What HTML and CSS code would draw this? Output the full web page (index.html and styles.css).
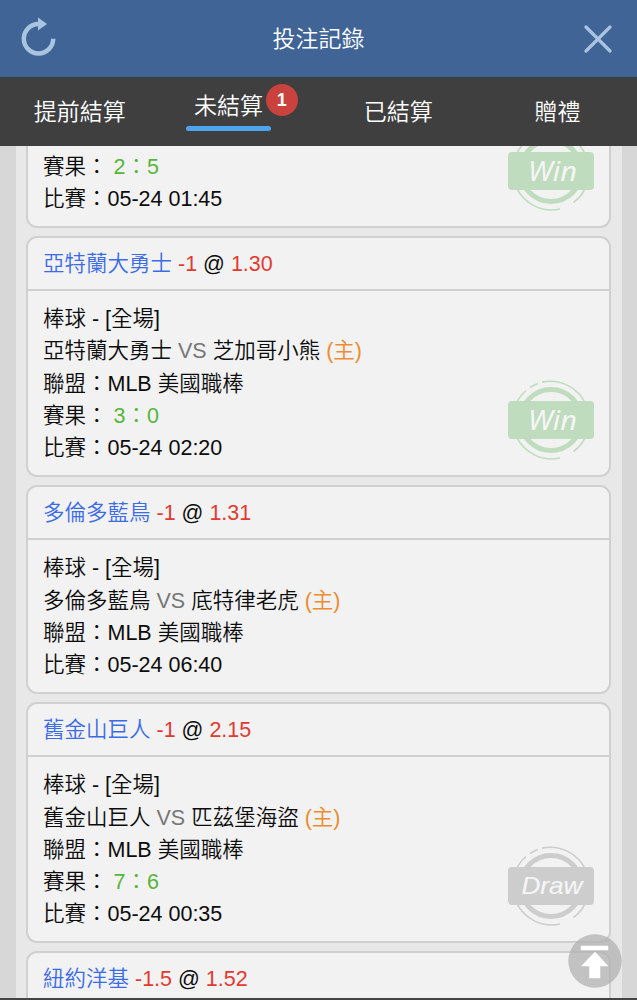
FILE: index.html
```html
<!DOCTYPE html>
<html lang="zh-Hant">
<head>
    <meta charset="UTF-8">
    <meta name="viewport" content="width=device-width, initial-scale=1.0">
    <title>投注記錄</title>
    <link rel="stylesheet" href="styles.css">
</head>
<body>
    <!-- stamp artwork shared by the cards -->
    <svg class="defs" width="0" height="0">
        <symbol id="stamp" viewBox="0 0 86 80">
            <circle cx="43" cy="40" r="30.5" fill="none" stroke="currentColor" stroke-width="5"/>
            <path d="M34 2.100A39 39 0 0 1 65.500 71.500M52 78A39 39 0 0 1 18 10.500M22 7.500A39 39 0 0 1 30 3.500" fill="none" stroke="currentColor" stroke-width="1.600"/>
            <rect y="21" width="86" height="38" rx="4" fill="currentColor"/>
        </symbol>
    </svg>

    <header class="header">
        <svg class="icon-refresh" width="36" height="40" viewBox="0 0 36 40">
            <path d="M18.500 7A14.700 14.700 0 1 0 33.200 21.700" fill="none" stroke="currentColor" stroke-width="4.500"/>
            <path d="M18 0.500L27 7L18 13.500Z" fill="currentColor"/>
        </svg>
        <h1>投注記錄</h1>
        <svg class="icon-close" width="28" height="28" viewBox="0 0 28 28">
            <path d="M2 2L26 26M26 2L2 26" fill="none" stroke="currentColor" stroke-width="3.200" stroke-linecap="round"/>
        </svg>
    </header>

    <nav class="tabs">
        <div class="tab">提前結算</div>
        <div class="tab active"><span class="tab-label">未結算<span class="badge">1</span></span></div>
        <div class="tab">已結算</div>
        <div class="tab">贈禮</div>
    </nav>

    <main class="list">
        <section class="card cut">
            <div class="card-body">
                <p>賽果： <span class="score">2：5</span></p>
                <p>比賽：05-24 01:45</p>
            </div>
            <svg class="stamp win" width="86" height="80">
                <use href="#stamp"/>
                <text x="20" y="50" textLength="49" lengthAdjust="spacingAndGlyphs">Win</text>
            </svg>
        </section>

        <section class="card">
            <h2 class="card-title"><span class="team">亞特蘭大勇士</span> <span class="odds">-1</span> @ <span class="odds">1.30</span></h2>
            <div class="card-body">
                <p>棒球 - [全場]</p>
                <p>亞特蘭大勇士 <span class="vs">VS</span> 芝加哥小熊 <span class="home">(主)</span></p>
                <p>聯盟：MLB 美國職棒</p>
                <p>賽果： <span class="score">3：0</span></p>
                <p>比賽：05-24 02:20</p>
            </div>
            <svg class="stamp win" width="86" height="80">
                <use href="#stamp"/>
                <text x="20" y="50" textLength="49" lengthAdjust="spacingAndGlyphs">Win</text>
            </svg>
        </section>

        <section class="card">
            <h2 class="card-title"><span class="team">多倫多藍鳥</span> <span class="odds">-1</span> @ <span class="odds">1.31</span></h2>
            <div class="card-body">
                <p>棒球 - [全場]</p>
                <p>多倫多藍鳥 <span class="vs">VS</span> 底特律老虎 <span class="home">(主)</span></p>
                <p>聯盟：MLB 美國職棒</p>
                <p>比賽：05-24 06:40</p>
            </div>
        </section>

        <section class="card">
            <h2 class="card-title"><span class="team">舊金山巨人</span> <span class="odds">-1</span> @ <span class="odds">2.15</span></h2>
            <div class="card-body">
                <p>棒球 - [全場]</p>
                <p>舊金山巨人 <span class="vs">VS</span> 匹茲堡海盜 <span class="home">(主)</span></p>
                <p>聯盟：MLB 美國職棒</p>
                <p>賽果： <span class="score">7：6</span></p>
                <p>比賽：05-24 00:35</p>
            </div>
            <svg class="stamp draw" width="86" height="80">
                <use href="#stamp"/>
                <text x="13.500" y="48" textLength="61" lengthAdjust="spacingAndGlyphs">Draw</text>
            </svg>
        </section>

        <section class="card">
            <h2 class="card-title"><span class="team">紐約洋基</span> <span class="odds">-1.5</span> @ <span class="odds">1.52</span></h2>
        </section>
    </main>

    <svg class="back-top" width="54" height="54" viewBox="0 0 54 54">
        <circle cx="27" cy="27" r="26.700" fill="#b2b2b2" fill-opacity="0.750"/>
        <path d="M13 12H40V16H13ZM27 18L40 32H32V44H21.500V32H13.500Z" fill="#fff" stroke="#fff" stroke-width="0.500" stroke-linejoin="round"/>
    </svg>
</body>
</html>
```

FILE: styles.css
```css
* {
    box-sizing: border-box;
}
body {
    display: flex;
    flex-direction: column;
    height: 1000px;
    margin: 0;
    overflow: hidden;
    border-bottom: 2px solid #444444;
    background: #d7d7d7;
    color: #0c0c0c;
    font-family: "Liberation Sans", "Noto Sans CJK TC", sans-serif;
    font-size: 21.5px;
}
h1, h2, p {
    margin: 0;
    font-weight: 350;
}
.defs {
    position: absolute;
}
.header {
    display: flex;
    flex: none;
    align-items: center;
    justify-content: space-between;
    height: 77px;
    padding: 0 25px 0 20px;
    background: #406496;
    color: #a9c4e0;
}
.header h1 {
    padding: 0 3px 4px 0;
    color: #ffffff;
    font-size: 23px;
}
.icon-refresh {
    margin-bottom: 3px;
}
.tabs {
    display: grid;
    flex: none;
    grid-template-columns: repeat(4, 1fr);
    height: 69px;
    background: #3f3f3f;
    color: #ffffff;
    font-size: 23px;
    font-weight: 350;
}
.tab {
    display: flex;
    align-items: center;
    justify-content: center;
    padding-bottom: 4px;
}
.active {
    align-items: flex-start;
    padding: 9px 21px 0 0;
}
.tab-label {
    position: relative;
    height: 45px;
    padding: 0 8px;
    line-height: 40px;
}
.tab-label::after {
    content: "";
    position: absolute;
    right: 0;
    bottom: 0;
    left: 0;
    height: 5px;
    border-radius: 3px;
    background: #4fa5ed;
}
.badge {
    position: absolute;
    top: -2px;
    right: -27px;
    width: 32px;
    height: 32px;
    border-radius: 50%;
    background: #c9423e;
    font-size: 18px;
    font-weight: bold;
    line-height: 32px;
    text-align: center;
}
.list {
    display: flex;
    flex: 1;
    flex-direction: column;
    gap: 8px;
    min-height: 0;
    margin: 0 15.5px;
    padding: 0 10.5px;
    overflow: hidden;
    background: #e8e8e8;
}
.card {
    position: relative;
    flex: none;
    border: 2px solid #d0d0d0;
    border-radius: 11px;
    background: #f2f2f2;
}
.card-title {
    height: 53px;
    padding: 0 15px;
    border-bottom: 2px solid #d0d0d0;
    font-size: 21.5px;
    line-height: 52px;
}
.card-body {
    padding: 12.2px 15px 10.6px;
    font-weight: 350;
}
.card-body p {
    height: 32.3px;
    line-height: 32.3px;
    white-space: nowrap;
}
/* first card is scrolled under the tabs */
.cut {
    border-top: 0;
    border-radius: 0 0 11px 11px;
}
.cut .card-body {
    padding-top: 4.7px;
}
.team {
    color: #3c6be8;
}
.odds {
    color: #e23a30;
}
.vs {
    color: #777777;
}
.home {
    color: #ee8b30;
}
.score {
    color: #57b53b;
}
.stamp {
    position: absolute;
    right: 15px;
    bottom: 15px;
}
.stamp text {
    fill: #f5f5f5;
    font-style: italic;
}
.win {
    color: #bfdcbf;
}
.win text {
    font-family: "Noto Sans", "Open Sans", sans-serif;
    font-size: 27px;
    font-weight: 400;
}
.draw {
    color: #cdcdcd;
}
.draw text {
    font-family: "Liberation Sans", sans-serif;
    font-size: 24px;
    font-weight: 400;
    stroke: #f5f5f5;
    stroke-width: 0.2px;
}
.back-top {
    position: fixed;
    right: 15px;
    bottom: 12px;
}
```
